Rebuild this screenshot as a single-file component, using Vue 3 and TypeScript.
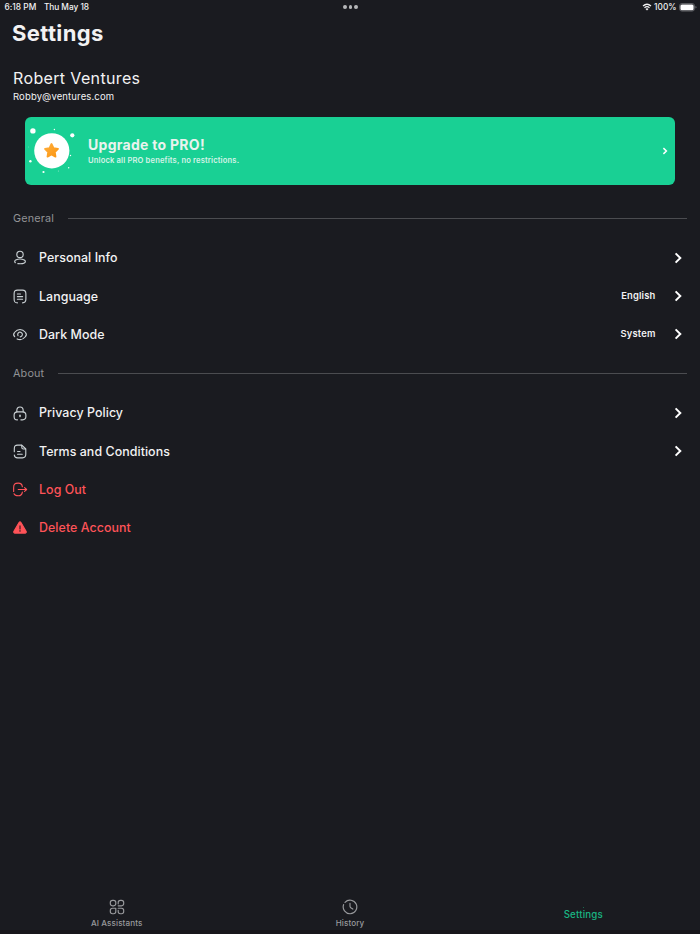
<script setup lang="ts">
type IconName = 'person' | 'language' | 'eye' | 'lock' | 'document' | 'logout' | 'warning'

interface Row {
  label: string
  icon: IconName
  value?: string
  danger?: boolean
}

interface Section {
  title: string
  rows: Row[]
}

const sections: Section[] = [
  {
    title: 'General',
    rows: [
      { label: 'Personal Info', icon: 'person' },
      { label: 'Language', icon: 'language', value: 'English' },
      { label: 'Dark Mode', icon: 'eye', value: 'System' },
    ],
  },
  {
    title: 'About',
    rows: [
      { label: 'Privacy Policy', icon: 'lock' },
      { label: 'Terms and Conditions', icon: 'document' },
      { label: 'Log Out', icon: 'logout', danger: true },
      { label: 'Delete Account', icon: 'warning', danger: true },
    ],
  },
]
</script>

<template>
  <div class="screen">
    <header class="status">
      <div class="status-left"><span class="time">6:18 PM</span><span class="date">Thu May 18</span></div>
      <div class="dots"><i /><i /><i /></div>
      <div class="status-right">
        <svg class="wifi" viewBox="0 0 20 16">
          <path d="M2 6.2Q10-1 18 6.2M5 9.4Q10 5 15 9.4" fill="none" stroke="currentColor" stroke-width="2.6" />
          <path d="M7 11.8Q10 9 13 11.8L10 15Z" fill="currentColor" />
        </svg>
        <span class="percent">100%</span>
        <svg class="battery" viewBox="0 0 18 9">
          <rect x=".5" y=".5" width="15" height="7.6" rx="2.4" fill="none" stroke="#77797c" stroke-width=".7" />
          <rect x="1.4" y="1.4" width="13.2" height="5.8" rx="1.5" fill="#fff" />
          <path d="M16.5 3v2.6q1-.4 1-1.3t-1-1.3Z" fill="#77797c" />
        </svg>
      </div>
    </header>

    <main class="content">
      <h1>Settings</h1>
      <div class="name">Robert Ventures</div>
      <div class="email">Robby@ventures.com</div>

      <section class="promo">
        <svg class="badge" viewBox="0 0 56 60">
          <defs>
            <linearGradient id="star" x1="0" y1="0" x2="1" y2="1">
              <stop offset="0" stop-color="#ffae3d" />
              <stop offset="1" stop-color="#fb9611" />
            </linearGradient>
          </defs>
          <g fill="#fff">
            <circle cx="27.8" cy="30.8" r="17.6" />
            <circle cx="8.9" cy="10.9" r="2.7" />
            <circle cx="48.3" cy="15.3" r="2.1" />
            <circle cx="6.4" cy="41.2" r="1.2" />
            <circle cx="19.5" cy="52" r="1.1" />
            <circle cx="30.4" cy="9.5" r=".7" />
            <circle cx="46.5" cy="35.5" r=".7" />
            <circle cx="44.7" cy="47.7" r=".7" />
            <circle cx="4.4" cy="27" r=".4" opacity=".6" />
            <circle cx="34.4" cy="51" r=".5" opacity=".6" />
          </g>
          <path
            d="M27.5 24l2 4.1 4.5.7-3.2 3.2.7 4.6-4-2.1-4 2.1.7-4.6-3.2-3.2 4.5-.7Z"
            fill="url(#star)" stroke="url(#star)" stroke-width="1.8" stroke-linejoin="round"
          />
        </svg>
        <div class="promo-text">
          <div class="promo-title">Upgrade to PRO!</div>
          <div class="promo-sub">Unlock all PRO benefits, no restrictions.</div>
        </div>
        <svg class="promo-chevron" viewBox="0 0 6 8"><path d="M1.4 1.1 4.4 4l-3 2.9" /></svg>
      </section>

      <section v-for="section in sections" :key="section.title" class="section">
        <div class="section-head"><h2>{{ section.title }}</h2><span class="rule" /></div>
        <div v-for="row in section.rows" :key="row.label" class="row" :class="{ danger: row.danger }">
          <svg class="icon" viewBox="0 0 15 16">
            <template v-if="row.icon === 'person'">
              <circle cx="7.5" cy="4.7" r="3.4" />
              <path d="M2.5 13.6c-1.1-1-.8-2.3.4-2.9 2.6-1.2 6.6-1.2 9.2 0 1.5.8 1.5 2.4 0 3.2-1.7.9-4.3 1-6.9.7" />
            </template>
            <template v-else-if="row.icon === 'language'">
              <path d="M4.8 14.8c-2.7 0-3.6-.9-3.6-3.8V5c0-2.9.9-3.8 3.6-3.8h5.4c2.7 0 3.6.9 3.6 3.8v6c0 2.9-.9 3.8-3.6 3.8" />
              <path d="M4.7 5.3H8M4.7 8.1h5.6M4.7 10.9h5.6" />
            </template>
            <template v-else-if="row.icon === 'eye'">
              <path d="M1.8 10.4C.5 9 .5 7 1.8 5.6c3.2-3.9 8.2-3.9 11.4 0 1.3 1.4 1.3 3.4 0 4.8-2.5 3-5.9 3.7-8.8 2.3" />
              <path d="M5.4 9.3A2.5 2.5 0 1 1 7.7 10.5" />
            </template>
            <template v-else-if="row.icon === 'lock'">
              <path d="M4.1 6.2V4.7C4.1 2.5 5.4 1 7.5 1s3.4 1.5 3.4 3.7v1.5" />
              <path d="M4.8 14.8c-2.8 0-3.6-.9-3.6-3.5V9.7c0-2.6.8-3.5 3.6-3.5h5.4c2.8 0 3.6.9 3.6 3.5v1.6c0 2.6-.8 3.5-3.6 3.5H8.4" />
              <path d="M7.5 9.8v1.4" stroke-width="1.6" />
            </template>
            <template v-else-if="row.icon === 'document'">
              <path d="M1.4 8.2V5c0-2.8.9-3.8 3.5-3.8h4.5l4.3 4.1V11c0 2.8-.9 3.8-3.5 3.8H4.9c-2.2 0-3.3-.8-3.5-3.1" />
              <path d="M9.4 1.5v1.9c0 1.3.5 1.9 1.8 1.9h2.2M4.9 8h2.6M4.9 10.9h5" />
            </template>
            <template v-else-if="row.icon === 'logout'">
              <path d="M10 5.1C9.8 2.2 8.8 1.2 5.6 1.2 1.7 1.2.7 2.2.7 6v4.2M1.1 12.6c.7 1.6 2 2.1 4.5 2.1 3.2 0 4.2-1 4.4-3.9M5.6 8h8.9M12.4 5.9 14.6 8l-2.2 2.1" />
            </template>
            <template v-else>
              <path class="solid" d="M6.5 2.7q1-1.4 2 0l5.5 9.4q.7 1.6-.9 1.9H1.9Q.3 13.7 1 12.1Z" />
              <path d="M7.5 6.3v3.2M7.5 11.3v.6" class="mark" />
            </template>
          </svg>
          <span class="label">{{ row.label }}</span>
          <span v-if="row.value" class="value">{{ row.value }}</span>
          <svg v-if="!row.danger" class="chevron" viewBox="0 0 8 12"><path d="M1.6 1.4 6.3 6l-4.7 4.6" /></svg>
        </div>
      </section>
    </main>

    <nav class="tabs">
      <div class="tab">
        <svg class="tab-icon" viewBox="0 0 16 16">
          <path d="M6.8 3.5v1.1c0 1.6-.6 2.2-2.2 2.2H3.5c-1.6 0-2.2-.6-2.2-2.2V3.5c0-1.6.6-2.2 2.2-2.2h1.1c1.6 0 2.2.6 2.2 2.2ZM9.2 4.8V3.5c0-1.6.6-2.2 2.2-2.2h1.1c1.6 0 2.2.6 2.2 2.2v1.1c0 1.6-.6 2.2-2.2 2.2H9.2M6.8 9.2v3.3c0 1.6-.6 2.2-2.2 2.2H3.5c-1.6 0-2.2-.6-2.2-2.2v-1.1c0-1.6.6-2.2 2.2-2.2ZM9.2 11.2v1.3c0 1.6.6 2.2 2.2 2.2h1.1c1.6 0 2.2-.6 2.2-2.2v-1.1c0-1.6-.6-2.2-2.2-2.2H9.2" />
        </svg>
        <span class="tab-label">AI Assistants</span>
      </div>
      <div class="tab">
        <svg class="tab-icon" viewBox="0 0 16 16">
          <path d="M3 3.3a6.8 6.8 0 1 1-1.4 2.3M1.2 8.4a6.8 6.8 0 0 0 1 3M8 4.2v3.1c0 .7.3 1.1.8 1.5l2 1.3" />
        </svg>
        <span class="tab-label">History</span>
      </div>
      <div class="tab active">
        <span class="speck" />
        <span class="tab-label">Settings</span>
      </div>
    </nav>
  </div>
</template>

<style>
body {
  margin: 0;
  background: #1a1b20;
}
</style>

<style scoped>
.screen {
  display: flex;
  flex-direction: column;
  width: 700px;
  height: 934px;
  box-sizing: border-box;
  overflow: hidden;
  background: #1a1b20;
  color: #f2f2f3;
  font-family: Inter, "Liberation Sans", sans-serif;
  border-bottom: 4px solid #17161b;
}
.status {
  display: grid;
  grid-template-columns: 1fr auto 1fr;
  align-items: center;
  height: 14px;
  padding: 0 3.5px 0 4.5px;
  font-size: 8.3px;
  font-weight: 500;
  line-height: 14px;
}
.status-left { display: flex; gap: 7.5px; }
.time { letter-spacing: 0.05px; }
.date { letter-spacing: -0.03px; }
.dots { display: flex; gap: 1.6px; }
.dots i { width: 3.8px; height: 3.8px; border-radius: 50%; background: #b5b6b8; }
.status-right { display: flex; justify-content: flex-end; align-items: center; }
.wifi { width: 10px; height: 8px; margin-right: 2.5px; }
.battery { width: 18px; height: 9px; margin-left: 2px; }
.content { padding: 0 13px; }
h1 {
  margin: 5px 0 0 -1px;
  font-size: 22px;
  line-height: 28px;
  font-weight: 700;
  letter-spacing: 0.38px;
}
.name {
  margin-top: 20px;
  font-size: 16px;
  line-height: 22px;
  letter-spacing: 0.36px;
}
.email {
  margin-top: 1px;
  font-size: 9.5px;
  line-height: 13px;
  letter-spacing: 0.13px;
}
.promo {
  display: flex;
  align-items: center;
  height: 68.2px;
  margin: 13.5px 12px 0;
  border-radius: 6px;
  background: #19d094;
}
.badge { width: 56px; height: 60px; margin: -1px 7px 0 -1px; }
.promo-text { flex: 1; padding: 1px 0 0 1px; }
.promo-title {
  font-size: 14px;
  line-height: 18px;
  font-weight: 700;
  letter-spacing: 0.28px;
  color: #e9f3ee;
}
.promo-sub {
  margin-top: 1px;
  font-size: 7.6px;
  line-height: 12px;
  font-weight: 600;
  letter-spacing: 0.15px;
  color: #d5f3e7;
}
.promo-chevron { width: 6px; height: 8px; margin-right: 7px; }
.promo-chevron path, .chevron path {
  fill: none;
  stroke: #fff;
  stroke-width: 1.5;
}
.section-head {
  display: flex;
  align-items: center;
  gap: 14px;
  height: 16px;
}
.section { padding-top: 25.7px; }
.section + .section { padding-top: 12px; }
h2 {
  margin: 0;
  padding-top: 1.4px;
  font-size: 10.8px;
  line-height: 16px;
  font-weight: 400;
  letter-spacing: 0.17px;
  color: #919295;
}
.rule { flex: 1; height: 1px; background: #4b4c50; }
.section-head + .row { margin-top: 12.3px; }
.row {
  display: flex;
  align-items: center;
  height: 38.3px;
}
.icon {
  width: 14px;
  height: 15px;
  margin-right: 12.5px;
  margin-left: -0.5px;
  overflow: visible;
  fill: none;
  stroke: #cbd2d5;
  stroke-width: 1.2;
  stroke-linecap: round;
  stroke-linejoin: round;
}
.label {
  flex: 1;
  padding-top: 0.8px;
  font-size: 12.4px;
  line-height: 16px;
  font-weight: 500;
  letter-spacing: 0.07px;
}
.danger { color: #ff5358; }
.danger .icon { stroke: #ff5358; }
.danger .solid { fill: #ff5358; }
.danger .mark { stroke: #25191d; }
.value { margin-right: 18.5px; font-size: 9.4px; line-height: 12px; font-weight: 600; letter-spacing: 0.18px; }
.chevron { width: 8px; height: 12px; margin-right: 5px; }
.chevron path { stroke-width: 2; }
.tabs {
  display: grid;
  grid-template-columns: repeat(3, 1fr);
  height: 38px;
  margin-top: auto;
  color: #999a9d;
}
.tab {
  display: flex;
  flex-direction: column;
  align-items: center;
  padding-top: 7px;
}
.tab-icon {
  width: 16px;
  height: 16px;
  fill: none;
  stroke: currentColor;
  stroke-width: 1.15;
  stroke-linecap: round;
  stroke-linejoin: round;
}
.tab-label { margin-top: 2px; font-size: 8.1px; line-height: 12px; font-weight: 500; letter-spacing: 0.1px; }
.active { padding-top: 0; color: #19b583; }
.active .tab-label { margin-top: 1px; font-size: 9.7px; letter-spacing: 0.2px; }
.speck { width: 1px; height: 1px; margin-top: 15px; background: #18694f; }
</style>
